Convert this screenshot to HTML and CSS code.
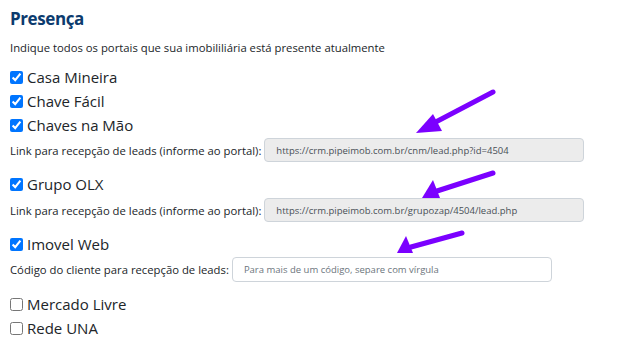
FILE: index.html
```html
<!DOCTYPE html>
<html lang="pt-BR">
<head>
<meta charset="utf-8">
<title>Presença</title>
<link rel="stylesheet" href="styles.css">
</head>
<body>
<div class="page">
  <h2 class="title">Presença</h2>
  <p class="desc">Indique todos os portais que sua imobililiária está presente atualmente</p>

  <label class="portal"><input type="checkbox" checked><span>Casa Mineira</span></label>
  <label class="portal"><input type="checkbox" checked><span>Chave Fácil</span></label>
  <label class="portal"><input type="checkbox" checked><span>Chaves na Mão</span></label>
  <div class="detail">
    <span class="detail-label">Link para recepção de leads (informe ao portal):</span>
    <input class="field field-ro" type="text" readonly value="https://crm.pipeimob.com.br/cnm/lead.php?id=4504">
  </div>

  <label class="portal"><input type="checkbox" checked><span>Grupo OLX</span></label>
  <div class="detail detail-2">
    <span class="detail-label">Link para recepção de leads (informe ao portal):</span>
    <input class="field field-ro" type="text" readonly value="https://crm.pipeimob.com.br/grupozap/4504/lead.php">
  </div>

  <label class="portal"><input type="checkbox" checked><span>Imovel Web</span></label>
  <div class="detail">
    <span class="detail-label">Código do cliente para recepção de leads:</span>
    <input class="field" type="text" placeholder="Para mais de um código, separe com vírgula">
  </div>

  <label class="portal"><input type="checkbox"><span>Mercado Livre</span></label>
  <label class="portal"><input type="checkbox"><span>Rede UNA</span></label>

  <svg class="arrows" width="630" height="352" viewBox="0 0 630 352">
    <g stroke="#7b00ff" stroke-width="5" stroke-linecap="round" fill="none">
      <line x1="493" y1="92" x2="430" y2="125"/>
      <line x1="493" y1="173" x2="437" y2="191"/>
      <line x1="462" y1="233" x2="411" y2="247"/>
    </g>
    <g fill="#7b00ff">
      <polygon points="416,133 433,114 442,131"/>
      <polygon points="422,198 433,180 440,198"/>
      <polygon points="397,253 406,236 413,253"/>
    </g>
  </svg>
</div>
</body>
</html>
```

FILE: styles.css
```css
html, body {
  margin: 0;
  padding: 0;
  background: #ffffff;
}

.page {
  position: relative;
  padding: 7px 10px 0;
  font-family: "Open Sans", "Noto Sans", sans-serif;
  color: #212529;
}

.title {
  margin: 0;
  font-size: 17px;
  line-height: 24px;
  font-weight: 700;
  letter-spacing: -0.4px;
  color: #0c3b6e;
}

.desc {
  margin: 9px 0 9px;
  font-size: 11.3px;
  line-height: 16px;
}

.portal {
  display: flex;
  align-items: center;
  height: 24px;
  font-size: 15px;
}

.portal input {
  margin: 0 4px 0 0;
  width: 13px;
  height: 13px;
  accent-color: #0075ff;
}

.detail {
  display: flex;
  align-items: center;
  gap: 3px;
  margin: 1px 0 10px;
}

.detail-2 {
  margin-top: 2px;
}

.detail-label {
  font-size: 11.3px;
}

.field {
  box-sizing: border-box;
  width: 320px;
  height: 25px;
  padding: 0 11px;
  border: 1px solid #ced4da;
  border-radius: 4px;
  background: #ffffff;
  font-family: "Open Sans", "Noto Sans", sans-serif;
  font-size: 9.5px;
  color: #495057;
  outline: none;
}

.field-ro {
  height: 24px;
  background: #ececec;
}

.field::placeholder {
  color: #6c757d;
}

.arrows {
  position: absolute;
  left: 0;
  top: 0;
  pointer-events: none;
}
```
